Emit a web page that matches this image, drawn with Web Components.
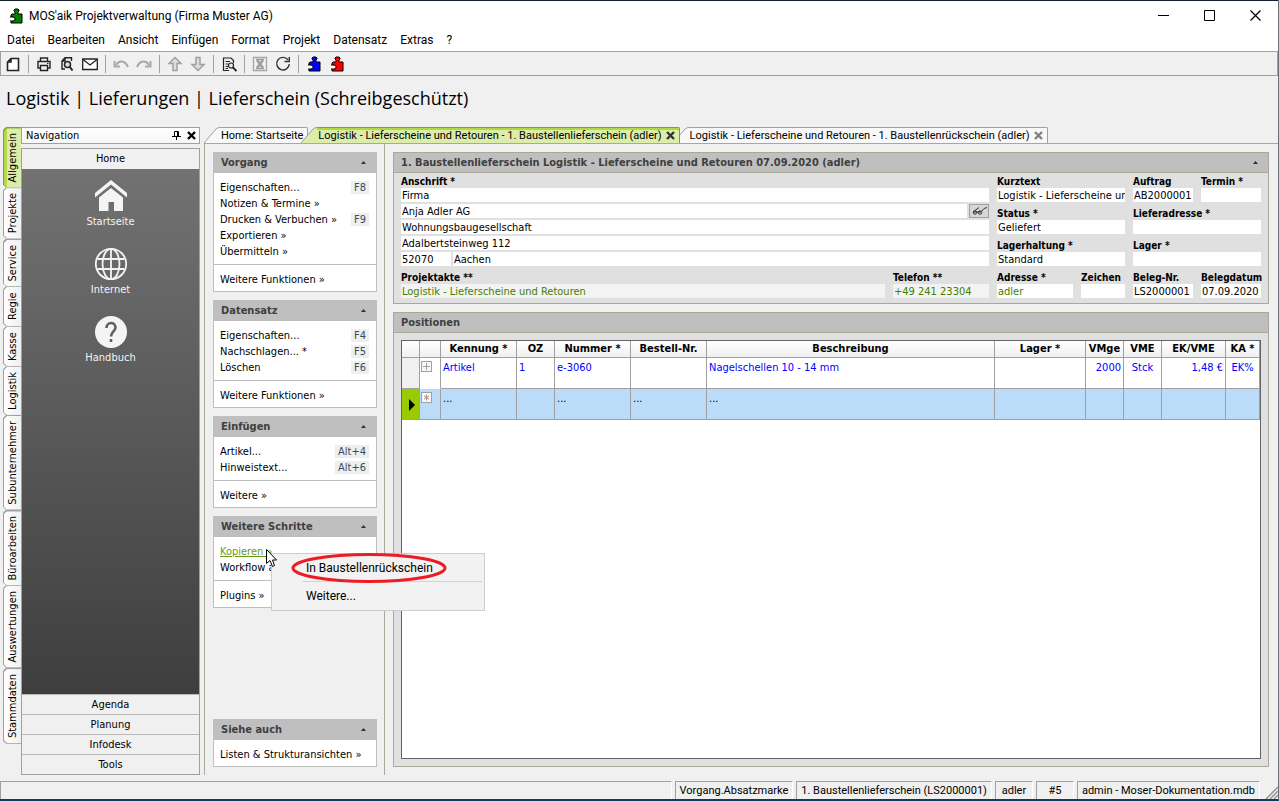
<!DOCTYPE html>
<html lang="de">
<head>
<meta charset="utf-8">
<title>MOS'aik Projektverwaltung (Firma Muster AG)</title>
<style>
    html, body {
        height: 100%;
        margin: 0;
    }

    body {
        --ui: "DejaVu Sans Condensed", "DejaVu Sans", sans-serif;
        --system: Roboto, "Open Sans", sans-serif;
        --line: #a0a0a0;
        --frame: #aca899;
        --head: #bfbfbf;
        font: 11px/16px var(--ui);
        color: #000;
        background: #f0f0f0;
    }
</style>
</head>
<body>
<mos-app></mos-app>

<script>
const base = `
    *, *::before, *::after { box-sizing: border-box; }
    button {
        font: inherit;
        color: inherit;
        margin: 0;
        padding: 0;
        border: 0;
        background: none;
        text-align: left;
        white-space: nowrap;
    }
`;

function define(name, render) {
  window.customElements.define(
    name,
    class extends HTMLElement {
      connectedCallback() {
        if (this.shadowRoot) return;
        this.attachShadow({ mode: "open" }).innerHTML = render(this);
      }
    }
  );
}

const puzzle = (fill) => `
    <svg width="14" height="16" viewBox="0 0 14 16" aria-hidden="true">
        <path d="M6 6V4L5 3V2L6 1H9L10 2V3L9 4V6H13V15H2V12H4L5 11V10L4 9H2V7L3 6Z" fill="${fill}" stroke="#000"/>
        <path d="M1 9H4L6 10V12L4 13H1" fill="#fff" stroke="#000"/>
    </svg>`;

const cross = (color) => `
    <svg width="9" height="9" viewBox="0 0 9 9" aria-hidden="true">
        <path d="M1 1L8 8M8 1L1 8" stroke="${color}" stroke-width="2.4"/>
    </svg>`;

const icons = {
  neu: `<path d="M6 2.5H13.5V14.5H2.5V6ZM6 2.5V6H2.5" fill="#fff" stroke="#222" stroke-width="1.6"/>`,
  drucken: `<path d="M4.5 5V2H11.5V5M4.5 12H2V5.5H14V12H11.5M4.5 9.5H11.5V14.5H4.5Z" fill="none" stroke="#222" stroke-width="1.4"/><path d="M11 7.5H12.5" stroke="#222"/>`,
  vorschau: `<path d="M12.5 5V1.8H6L3 5V13H6M6 2V5H3" fill="none" stroke="#222" stroke-width="1.4"/><circle cx="8.5" cy="8.5" r="3" fill="#ddd" stroke="#222" stroke-width="1.5"/><path d="M10.5 10.5L13.5 14.5" stroke="#222" stroke-width="2"/>`,
  mail: `<path d="M.7 3H15.3V13.5H.7Z" fill="#fff" stroke="#222" stroke-width="1.3"/><path d="M1 3.5L8 9L15 3.5" fill="none" stroke="#222" stroke-width="1.3"/>`,
  zurueck: `<path d="M1.500 5V10.500H7M3 9C6 4 12 4 15 11" fill="none" stroke="#a9a9a9" stroke-width="2"/>`,
  vor: `<path d="M14.500 5V10.500H9M13 9C10 4 4 4 1 11" fill="none" stroke="#a9a9a9" stroke-width="2"/>`,
  hoch: `<path d="M8 1.5L14 7.5H10V14.5H6V7.5H2Z" fill="#ddd" stroke="#a0a0a0" stroke-width="1.5"/>`,
  runter: `<path d="M8 14.5L14 8.5H10V1.5H6V8.5H2Z" fill="#ddd" stroke="#a0a0a0" stroke-width="1.5"/>`,
  suchen: `<path d="M12.5 7V4.5L10 2H2.5V14.5H8M4.5 5.5H9M4.5 8H7.5M4.5 10.5H7M4.5 12.5H7" fill="none" stroke="#222" stroke-width="1.2"/><circle cx="10" cy="9.5" r="2.5" fill="#eee" stroke="#222" stroke-width="1.2"/><path d="M12 11.5L15.5 15" stroke="#222" stroke-width="1.8"/>`,
  export: `<path d="M1.5 1.5H14.5V14.5H1.5Z" fill="none" stroke="#a6a6a6" stroke-width="1.3"/><path d="M4 3.5H12M4 12.5H12" stroke="#a0a0a0" stroke-width="1.6"/><path d="M5 4L11 12M11 4L5 12" stroke="#a0a0a0" stroke-width="2.6"/>`,
  neuladen: `<path d="M13 3.8A6.3 6.3 0 1 0 14.3 8M9.5 5.5H14.3V1" fill="none" stroke="#333" stroke-width="1.4"/>`,
};

define("mos-title-bar", () => `
    <style>
        ${base}
        :host {
            display: flex;
            align-items: center;
            height: 30px;
            padding-left: 9px;
            font: 12px/16px var(--system);
            background: #fff;
            border-top: 1px solid #14202e;
            box-sizing: content-box;
        }
        .title { flex: 1; padding-left: 6px; }
        button { width: 46px; height: 30px; display: grid; place-items: center; }
    </style>
    ${puzzle("#008000")}
    <span class="title"><slot></slot></span>
    <button aria-label="Minimieren"><svg width="11" height="11"><path d="M0 5.5H11" stroke="#000"/></svg></button>
    <button aria-label="Maximieren"><svg width="11" height="11"><path d="M.5 .5H10.5V10.5H.5Z" fill="none" stroke="#000"/></svg></button>
    <button aria-label="Schließen"><svg width="11" height="11"><path d="M.5 .5L10.5 10.5M10.5 .5L.5 10.5" stroke="#000" stroke-width="1.200"/></svg></button>
`);

define("mos-menu-bar", (el) => `
    <style>
        ${base}
        :host {
            display: flex;
            gap: 13px;
            padding: 0 7px;
            font: 12px/21px var(--system);
            background: #fff;
        }
    </style>
    ${el.getAttribute("items").split(",").map((t) => `<button>${t}</button>`).join("")}
`);

define("mos-tool-bar", () => `
    <style>
        ${base}
        :host {
            display: flex;
            align-items: center;
            height: 25px;
            border: 1px solid var(--line);
            box-sizing: border-box;
        }
        button { width: 23px; height: 22px; display: grid; place-items: center; }
        i { width: 8px; height: 18px; border-left: 1px solid var(--line); margin-left: 4px; margin-right: -4px; }
    </style>
    ${[["neu"], ["drucken", "vorschau", "mail"], ["zurueck", "vor"], ["hoch", "runter"], ["suchen"], ["export", "neuladen"]]
      .map((g) => g.map((n) => `<button aria-label="${n}"><svg width="16" height="16" viewBox="0 0 16 16">${icons[n]}</svg></button>`).join(""))
      .join("<i></i>")}
    <i></i>
    <button aria-label="Modul blau">${puzzle("#0000ff")}</button>
    <button aria-label="Modul rot">${puzzle("#ff0000")}</button>
`);

// vertical register tabs at the left window edge
define("mos-side-tab", (el) => `
    <style>
        ${base}
        :host {
            display: block;
            --cut: polygon(3px 0, 100% 0, 100% 100%, 3px 100%, 0 calc(100% - 3px), 0 3px);
            background: var(--line);
            clip-path: var(--cut);
            padding: 1px 0 0 1px;
        }
        :host(:last-of-type) { padding-bottom: 1px; }
        :host([active]) { background: #7aa51e; }
        button {
            display: block;
            width: 17px;
            min-height: 39px;
            padding: 5px 0;
            writing-mode: vertical-rl;
            transform: rotate(180deg);
            text-align: center;
            line-height: 16px;
            background: linear-gradient(to left, #fff, #f0f0f0);
            clip-path: polygon(0 0, calc(100% - 3px) 0, 100% 3px, 100% calc(100% - 3px), calc(100% - 3px) 100%, 0 100%);
        }
        :host([active]) button { background: linear-gradient(to left, #b5d94c 3px, #dcedaa 3px); }
    </style>
    <button><slot></slot></button>
`);

define("mos-nav-item", (el) => `
    <style>
        ${base}
        :host { display: block; height: 68px; }
        button { width: 100%; display: flex; flex-direction: column; align-items: center; gap: 1px; color: #f4f4f4; }
    </style>
    <button>
        <svg width="34" height="34" viewBox="0 0 34 34" aria-hidden="true">${{
          home: `<path d="M17 1L33 14V18.500L17 5.500L1 18.500V14Z" fill="#f4f4f4"/><path d="M5 18.500L17 9L29 18.500V32H20V23H14.500V32H5Z" fill="#f4f4f4"/>`,
          globe: `<g fill="none" stroke="#f4f4f4" stroke-width="1.800"><circle cx="17" cy="17" r="15.200"/><ellipse cx="17" cy="17" rx="8.500" ry="15.200"/><path d="M17 2V32M3.500 12H30.500M3.500 22H30.500"/></g>`,
          help: `<circle cx="17" cy="17" r="16" fill="#f4f4f4"/><path d="M12.500 13C12.500 6.500 21.500 6.500 21.500 12.500C21.500 16.500 17 16.500 17 21.500M17 24V27" fill="none" stroke="#606060" stroke-width="2.600"/>`,
        }[el.getAttribute("icon")]}</svg>
        <slot></slot>
    </button>
`);

define("mos-navigation", () => `
    <style>
        ${base}
        :host { display: flex; flex-direction: column; gap: 4px; width: 179px; }
        header {
            display: flex;
            align-items: center;
            gap: 6px;
            height: 17px;
            padding: 0 3px 0 4px;
            line-height: 18px;
            border: 1px solid var(--line);
            background: linear-gradient(#fff, #f6f6f6);
        }
        header span { flex: 1; }
        header button { display: grid; }
        .box { flex: 1; display: flex; flex-direction: column; border: 1px solid var(--line); }
        .box > button { height: 20px; line-height: 20px; text-align: center; border-top: 1px solid #b8b8b8; }
        .box > button:first-child { border: 0; }
        .items { flex: 1; padding-top: 10px; background: linear-gradient(#727272, #3e3e3e); }
    </style>
    <header>
        <span>Navigation</span>
        <button aria-label="Anheften"><svg width="9" height="9"><path d="M2.500 5V.5H6.500V5M5.500 .5V5M0 5.500H9M4.500 5V9" fill="none" stroke="#000"/></svg></button>
        <button aria-label="Schließen">${cross("#000")}</button>
    </header>
    <div class="box">
        <button>Home</button>
        <div class="items"><slot></slot></div>
        <button>Agenda</button>
        <button>Planung</button>
        <button>Infodesk</button>
        <button>Tools</button>
    </div>
`);

define("mos-doc-tab", (el) => `
    <style>
        ${base}
        :host { display: flex; height: 16px; font-family: var(--system); --edge: var(--line); --fill: #f8f8f8; }
        :host(:not(:first-of-type)) { margin-left: -7px; }
        :host([active]) { z-index: 1; --edge: #7aa51e; --fill: #dcedaa; }
        svg { flex: none; }
        .body {
            display: flex;
            align-items: center;
            gap: 4px;
            padding: 0 4px 0 1px;
            border-top: 1px solid var(--edge);
            border-right: 1px solid var(--edge);
            border-top-right-radius: 2px;
            background: var(--fill);
        }
        :host([active]) .body { box-shadow: inset 0 2px #b0d840; }
        button { line-height: 16px; }
        .close svg { display: block; }
    </style>
    <svg width="16" height="16" viewBox="0 0 16 16">
        <path d="M0 16L12 2Q13.500 .5 16 .5V16Z" fill="var(--fill)"/>
        <path d="M0 16L12 2Q13.500 .5 16 .5" fill="none" stroke="var(--line)"/>
    </svg>
    <div class="body">
        <button><slot></slot></button>
        ${el.hasAttribute("closable") ? `<button class="close" aria-label="Schließen">${cross(el.hasAttribute("active") ? "#333" : "#808080")}</button>` : ""}
    </div>
`);

define("mos-task", (el) => `
    <style>
        ${base}
        :host { display: flex; justify-content: space-between; height: 16px; line-height: 18px; padding: 0 7px 0 6px; }
        :host([link]) { color: #6a9a10; }
        :host([link]) a { text-decoration: underline; }
        a { color: inherit; text-decoration: none; white-space: nowrap; }
        kbd { font: inherit; line-height: 14px; height: 13px; margin-top: 2px; padding: 0 3px; background: #eee; color: #3a4c5c; }
    </style>
    <a href="#"><slot></slot></a>
    ${el.hasAttribute("key") ? `<kbd>${el.getAttribute("key")}</kbd>` : ""}
`);

define("mos-task-panel", (el) => `
    <style>
        ${base}
        :host { display: block; border: 1px solid var(--head); border-top: 0; background: #fff; }
        h2 {
            display: flex;
            align-items: center;
            justify-content: space-between;
            height: 21px;
            margin: 0;
            padding: 0 10px 0 7px;
            font: bold 11px/22px var(--ui);
            color: #404040;
            background: var(--head);
        }
        .list { padding: 6px 0 5px; }
        .more { padding: 6px 0 4px; }
        .list + .more { border-top: 1px solid var(--head); }
    </style>
    <h2>${el.getAttribute("heading")}<svg width="5" height="3"><path d="M0 3L2.500 0L5 3Z" fill="#303030"/></svg></h2>
    ${el.hasAttribute("short") ? "" : `<div class="list"><slot></slot></div>`}
    <div class="more"><slot name="more"></slot></div>
`);

define("mos-panel", (el) => `
    <style>
        ${base}
        :host { display: flex; flex-direction: column; border: 1px solid var(--frame); background: #e0e0e0; }
        h2 {
            display: flex;
            align-items: center;
            justify-content: space-between;
            height: 20px;
            margin: 0;
            padding: 0 10px 0 7px;
            font: bold 11px/20px var(--ui);
            color: #404040;
            background: var(--head);
            border-bottom: 1px solid var(--frame);
        }
    </style>
    <h2>${el.getAttribute("heading")}${el.hasAttribute("foldable") ? `<svg width="5" height="3"><path d="M0 3L2.500 0L5 3Z" fill="#303030"/></svg>` : ""}</h2>
    <slot></slot>
`);

define("mos-field", (el) => `
    <style>
        ${base}
        :host { display: block; min-width: 0; flex: none; width: var(--w, auto); }
        label { display: block; height: 15px; font: bold 10px/17px var(--ui); white-space: nowrap; }
        input {
            display: block;
            width: 100%;
            height: 14px;
            padding: 1px 0 0 1px;
            border: 0;
            border-radius: 0;
            background: #fff;
            color: #000;
            font: 11px/13px var(--ui);
        }
        :host([green]) input { color: #3f8000; }
        :host([muted]) input { background: #f3f3f3; }
    </style>
    ${el.hasAttribute("label") ? `<label for="f">${el.getAttribute("label")}</label>` : ""}
    <input id="f" type="text" value="${el.getAttribute("value") || ""}" ${el.hasAttribute("label") ? "" : `aria-label="${el.getAttribute("name")}"`} readonly>
`);

define("mos-document-head", () => `
    <style>
        ${base}
        :host { display: flex; gap: 8px; padding: 0 7px 5px; }
        .address { flex: 1; display: flex; flex-direction: column; gap: 3px; min-width: 0; }
        .lines { display: flex; flex-direction: column; gap: 2px; }
        .data { display: flex; flex-direction: column; gap: 3px; }
        .row { display: flex; gap: 8px; }
        .row.tight { gap: 2px; }
        .grow { flex: 1; }
        .w44 { --w: 44px; }
        .w50 { --w: 50px; }
        .w60 { --w: 60px; }
        .w76 { --w: 76px; }
        .w96 { --w: 96px; }
        .w128 { --w: 128px; }
        button { width: 20px; height: 14px; border: 1px solid var(--line); background: #d6d6d6; display: grid; place-items: center; }
    </style>
    <div class="address">
        <div class="lines">
            <mos-field label="Anschrift *" value="Firma"></mos-field>
            <div class="row tight">
                <mos-field class="grow" name="Name" value="Anja Adler AG"></mos-field>
                <button aria-label="Adresse ansehen"><svg width="15" height="8"><path d="M1 5L7 .5M1 5H9L12 1.500L15 .5" fill="none" stroke="#333"/><circle cx="3" cy="5.500" r="1.700" fill="none" stroke="#333"/><circle cx="8" cy="5.500" r="1.700" fill="none" stroke="#333"/></svg></button>
            </div>
            <mos-field name="Zusatz" value="Wohnungsbaugesellschaft"></mos-field>
            <mos-field name="Straße" value="Adalbertsteinweg 112"></mos-field>
            <div class="row tight">
                <mos-field class="w50" name="PLZ" value="52070"></mos-field>
                <mos-field class="grow" name="Ort" value="Aachen"></mos-field>
            </div>
        </div>
        <div class="row">
            <mos-field class="grow" muted green label="Projektakte **" value="Logistik - Lieferscheine und Retouren"></mos-field>
            <mos-field class="w96" muted green label="Telefon **" value="+49 241 23304"></mos-field>
        </div>
    </div>
    <div class="data">
        <div class="row">
            <mos-field class="w128" label="Kurztext" value="Logistik - Lieferscheine und Retouren"></mos-field>
            <mos-field class="w60" label="Auftrag" value="AB2000001"></mos-field>
            <mos-field class="w60" label="Termin *"></mos-field>
        </div>
        <div class="row">
            <mos-field class="w128" label="Status *" value="Geliefert"></mos-field>
            <mos-field class="w128" label="Lieferadresse *"></mos-field>
        </div>
        <div class="row">
            <mos-field class="w128" label="Lagerhaltung *" value="Standard"></mos-field>
            <mos-field class="w128" label="Lager *"></mos-field>
        </div>
        <div class="row">
            <mos-field class="w76" green label="Adresse *" value="adler"></mos-field>
            <mos-field class="w44" label="Zeichen"></mos-field>
            <mos-field class="w60" label="Beleg-Nr." value="LS2000001"></mos-field>
            <mos-field class="w60" label="Belegdatum" value="07.09.2020"></mos-field>
        </div>
    </div>
`);

define("mos-position-grid", () => `
    <style>
        ${base}
        :host { display: block; flex: 1; margin: 7px; border: 1px solid #646464; background: #fff; }
        table { width: 100%; table-layout: fixed; border-collapse: separate; border-spacing: 0; }
        th, td { padding: 0 2px; border: solid var(--line); border-width: 0 1px 1px 0; overflow: hidden; white-space: nowrap; }
        th { height: 17px; padding: 0; font: bold 11px/16px var(--ui); background: linear-gradient(#fff, #f0f0f0); }
        td { height: 31px; vertical-align: top; text-align: left; line-height: 19px; color: #0000ff; }
        td.right { text-align: right; }
        td.mid { text-align: center; }
        td.mark { background: #f0f0f0; }
        td.node { border-bottom-color: transparent; }
        tr.new td { background: #badcf8; color: #000; line-height: 20px; }
        tr.new td.mark { background: #99cc00; padding: 10px 0 0 6px; }
        tr.new td.node { border-bottom-color: var(--line); }
        .node button { display: block; width: 11px; height: 11px; margin: 3px 0 0 -1px; border: 1px solid var(--line); background: #f8f8f8; }
        .node svg, .mark svg { display: block; }
    </style>
    <table>
        <colgroup>
            <col style="width:18px"><col style="width:21px"><col style="width:76px"><col style="width:38px">
            <col style="width:76px"><col style="width:76px"><col><col style="width:91px">
            <col style="width:38px"><col style="width:38px"><col style="width:64px"><col style="width:34px">
        </colgroup>
        <thead>
            <tr><th></th><th></th><th>Kennung *</th><th>OZ</th><th>Nummer *</th><th>Bestell-Nr.</th><th>Beschreibung</th><th>Lager *</th><th>VMge</th><th>VME</th><th>EK/VME</th><th>KA *</th></tr>
        </thead>
        <tbody>
            <tr>
                <td class="mark"></td>
                <td class="node"><button aria-label="Aufklappen"><svg width="9" height="9"><path d="M1 4.500H8M4.500 1V8" stroke="#a0a0a0"/></svg></button></td>
                <td>Artikel</td><td>1</td><td>e-3060</td><td></td><td>Nagelschellen 10 - 14 mm</td><td></td>
                <td class="right">2000</td><td class="mid">Stck</td><td class="right">1,48 €</td><td class="mid">EK%</td>
            </tr>
            <tr class="new">
                <td class="mark"><svg width="7" height="12"><path d="M1 0L7 6L1 12Z"/></svg></td>
                <td class="node"><button aria-label="Neu"><svg width="9" height="9"><path d="M4.500 1.500V7.500M2 3L7 6M7 3L2 6" stroke="#b09090"/></svg></button></td>
                <td>...</td><td></td><td>...</td><td>...</td><td>...</td><td></td><td></td><td></td><td></td><td></td>
            </tr>
        </tbody>
    </table>
`);

define("mos-context-menu", () => `
    <style>
        ${base}
        :host {
            position: absolute;
            left: 271px;
            top: 553px;
            z-index: 5;
            width: 214px;
            box-sizing: border-box;
            padding: 1px 2px;
            border: 1px solid #ccc;
            background: #f2f2f2;
            font: 12px/26px var(--system);
        }
        button { display: block; width: 100%; padding-left: 32px; }
        hr { margin: 0 0 1px 28px; border: 0; border-top: 1px solid #d4d4d4; }
        .ring { position: absolute; left: 19px; top: -3px; }
        .pointer { position: absolute; left: -6px; top: -5px; }
    </style>
    <button>In Baustellenrückschein</button>
    <hr>
    <button>Weitere...</button>
    <svg class="ring" width="156" height="34"><ellipse cx="78" cy="17" rx="76" ry="13.500" fill="none" stroke="#ed1c24" stroke-width="3"/></svg>
    <svg class="pointer" width="12" height="19"><path d="M.5 .5V14.500L4 11.500L6.500 17.500L8.500 16.500L6.500 11H10.500Z" fill="#fff" stroke="#000"/></svg>
`);

define("mos-status-bar", (el) => `
    <style>
        ${base}
        :host { display: flex; gap: 3px; height: 18px; margin-top: 6px; font-family: var(--system); line-height: 17px; }
        span { padding: 0 4px; border: solid var(--line); border-width: 1px 0 0 1px; border-right: 1px solid #fff; white-space: nowrap; text-align: center; min-width: 38px; }
        .rest { flex: 1; }
        .grip { width: 15px; margin-top: 5px; align-self: end; }
    </style>
    <span class="rest"></span>
    ${el.getAttribute("cells").split("|").map((t) => `<span>${t}</span>`).join("")}
    <svg class="grip" width="15" height="13"><path d="M3 13L15 1M7 13L15 5M11 13L15 9" stroke="#909090" stroke-width="1.400"/></svg>
`);

define("mos-app", () => `
    <style>
        ${base}
        :host {
            display: flex;
            flex-direction: column;
            min-height: 100%;
            box-sizing: border-box;
            border-right: 1px solid #6b6f78;
            border-bottom: 2px solid #123a66;
        }
        h1 { margin: 0; padding: 0 6px 7px; font: 18px/44px "Open Sans", "Noto Sans", sans-serif; }
        main { flex: 1; display: flex; padding-left: 3px; }
        .registers { width: 18px; }
        .work { flex: 1; display: flex; flex-direction: column; margin-left: 4px; min-width: 0; }
        .tabs { display: flex; }
        .frame { flex: 1; display: flex; border: 1px solid var(--frame); border-width: 1px 0 0 1px; }
        .tasks { width: 180px; display: flex; flex-direction: column; gap: 8px; padding: 8px 7px 8px 8px; border-right: 1px solid var(--frame); }
        .tasks .last { margin-top: auto; }
        .content { flex: 1; display: flex; flex-direction: column; gap: 8px; padding: 8px 9px 8px 8px; min-width: 0; }
        .content .fill { flex: 1; }
    </style>
    <mos-title-bar>MOS'aik Projektverwaltung (Firma Muster AG)</mos-title-bar>
    <mos-menu-bar items="Datei,Bearbeiten,Ansicht,Einfügen,Format,Projekt,Datensatz,Extras,?"></mos-menu-bar>
    <mos-tool-bar></mos-tool-bar>
    <h1>Logistik | Lieferungen | Lieferschein (Schreibgeschützt)</h1>
    <main>
        <div class="registers">
            <mos-side-tab active>Allgemein</mos-side-tab>
            <mos-side-tab>Projekte</mos-side-tab>
            <mos-side-tab>Service</mos-side-tab>
            <mos-side-tab>Regie</mos-side-tab>
            <mos-side-tab>Kasse</mos-side-tab>
            <mos-side-tab>Logistik</mos-side-tab>
            <mos-side-tab>Subunternehmer</mos-side-tab>
            <mos-side-tab>Büroarbeiten</mos-side-tab>
            <mos-side-tab>Auswertungen</mos-side-tab>
            <mos-side-tab>Stammdaten</mos-side-tab>
        </div>
        <mos-navigation>
            <mos-nav-item icon="home">Startseite</mos-nav-item>
            <mos-nav-item icon="globe">Internet</mos-nav-item>
            <mos-nav-item icon="help">Handbuch</mos-nav-item>
        </mos-navigation>
        <div class="work">
            <div class="tabs">
                <mos-doc-tab>Home: Startseite</mos-doc-tab>
                <mos-doc-tab active closable>Logistik - Lieferscheine und Retouren - 1. Baustellenlieferschein (adler)</mos-doc-tab>
                <mos-doc-tab closable>Logistik - Lieferscheine und Retouren - 1. Baustellenrückschein (adler)</mos-doc-tab>
            </div>
            <div class="frame">
                <div class="tasks">
                    <mos-task-panel heading="Vorgang">
                        <mos-task key="F8">Eigenschaften...</mos-task>
                        <mos-task>Notizen &amp; Termine »</mos-task>
                        <mos-task key="F9">Drucken &amp; Verbuchen »</mos-task>
                        <mos-task>Exportieren »</mos-task>
                        <mos-task>Übermitteln »</mos-task>
                        <mos-task slot="more">Weitere Funktionen »</mos-task>
                    </mos-task-panel>
                    <mos-task-panel heading="Datensatz">
                        <mos-task key="F4">Eigenschaften...</mos-task>
                        <mos-task key="F5">Nachschlagen... *</mos-task>
                        <mos-task key="F6">Löschen</mos-task>
                        <mos-task slot="more">Weitere Funktionen »</mos-task>
                    </mos-task-panel>
                    <mos-task-panel heading="Einfügen">
                        <mos-task key="Alt+4">Artikel...</mos-task>
                        <mos-task key="Alt+6">Hinweistext...</mos-task>
                        <mos-task slot="more">Weitere »</mos-task>
                    </mos-task-panel>
                    <mos-task-panel heading="Weitere Schritte">
                        <mos-task link>Kopieren »</mos-task>
                        <mos-task>Workflow a</mos-task>
                        <mos-task slot="more">Plugins »</mos-task>
                    </mos-task-panel>
                    <mos-task-panel class="last" heading="Siehe auch" short>
                        <mos-task slot="more">Listen &amp; Strukturansichten »</mos-task>
                    </mos-task-panel>
                </div>
                <div class="content">
                    <mos-panel foldable heading="1. Baustellenlieferschein Logistik - Lieferscheine und Retouren 07.09.2020 (adler)">
                        <mos-document-head></mos-document-head>
                    </mos-panel>
                    <mos-panel class="fill" heading="Positionen">
                        <mos-position-grid></mos-position-grid>
                    </mos-panel>
                </div>
            </div>
        </div>
    </main>
    <mos-status-bar cells="Vorgang.Absatzmarke|1. Baustellenlieferschein (LS2000001)|adler|#5|admin - Moser-Dokumentation.mdb"></mos-status-bar>
    <mos-context-menu></mos-context-menu>
`);
</script>
</body>
</html>
